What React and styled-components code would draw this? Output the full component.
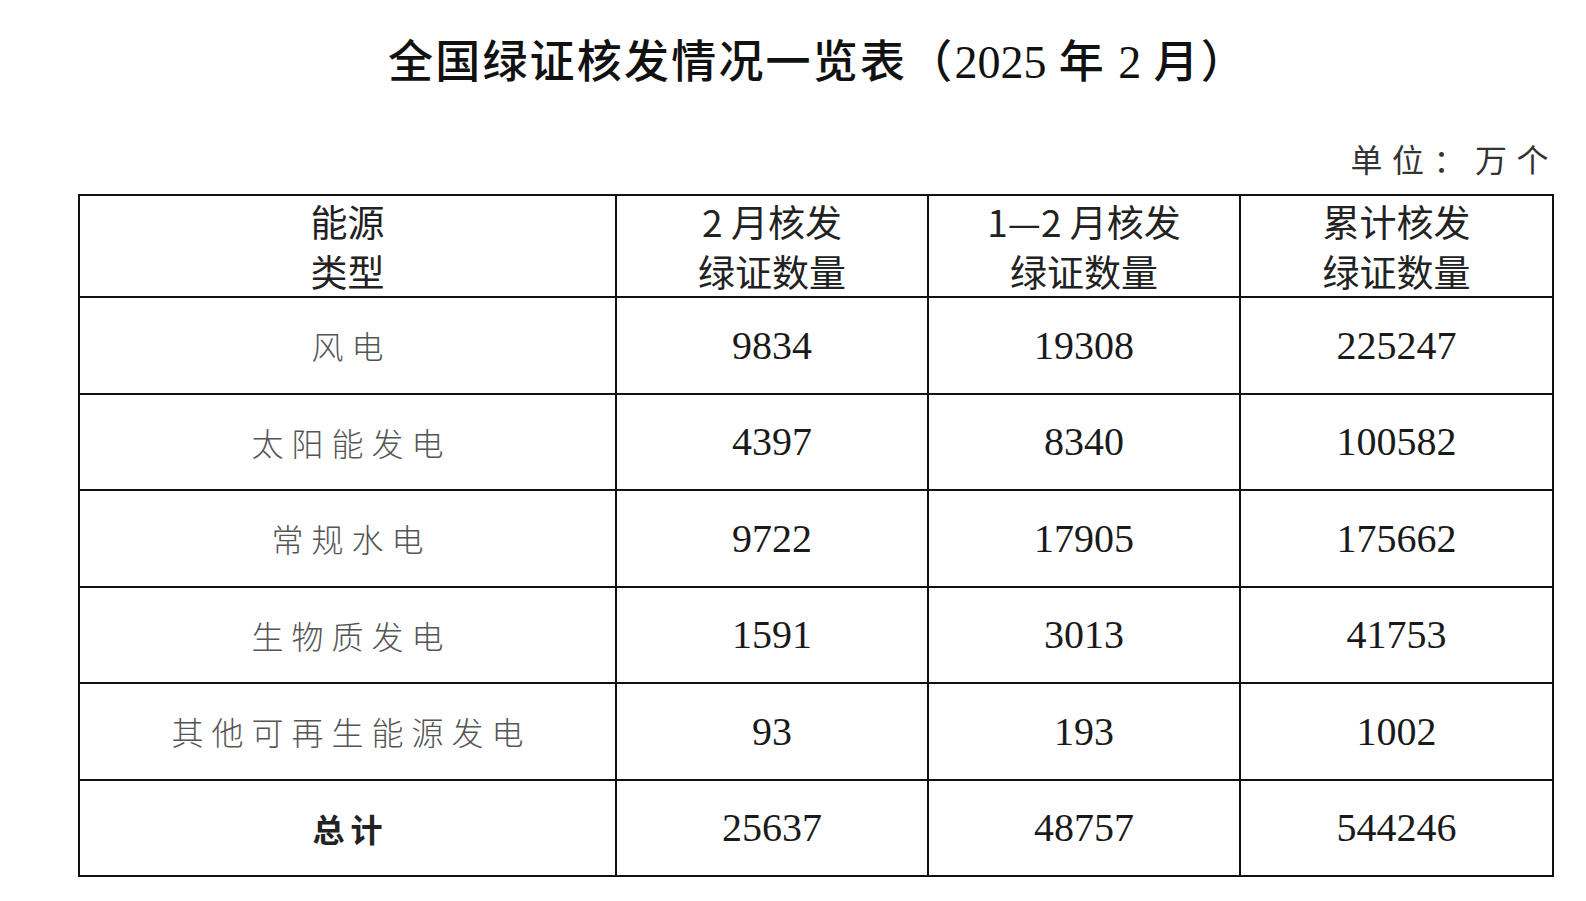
import styled, { createGlobalStyle } from "styled-components";

const GlobalStyle = createGlobalStyle`
  html, body {
    margin: 0;
    padding: 0;
    background: #ffffff;
  }
`;

const rows = [
  { name: "风电", feb: "9834", janFeb: "19308", total: "225247" },
  { name: "太阳能发电", feb: "4397", janFeb: "8340", total: "100582" },
  { name: "常规水电", feb: "9722", janFeb: "17905", total: "175662" },
  { name: "生物质发电", feb: "1591", janFeb: "3013", total: "41753" },
  { name: "其他可再生能源发电", feb: "93", janFeb: "193", total: "1002" },
];

const App = () => {
  return (
    <Page>
      <GlobalStyle />
      <Title>
        全国绿证核发情况一览表（<Num>2025</Num> 年 <Num>2</Num> 月）
      </Title>
      <Unit>单位：万个</Unit>
      <Table>
        <colgroup>
          <col style={{ width: 537 }} />
          <col style={{ width: 312 }} />
          <col style={{ width: 312 }} />
          <col style={{ width: 313 }} />
        </colgroup>
        <thead>
          <tr>
            <HeadCell>
              能源
              <br />
              类型
            </HeadCell>
            <HeadCell>
              2 月核发
              <br />
              绿证数量
            </HeadCell>
            <HeadCell>
              1—2 月核发
              <br />
              绿证数量
            </HeadCell>
            <HeadCell>
              累计核发
              <br />
              绿证数量
            </HeadCell>
          </tr>
        </thead>
        <tbody>
          {rows.map((r) => (
            <tr key={r.name}>
              <NameCell>{r.name}</NameCell>
              <NumCell>{r.feb}</NumCell>
              <NumCell>{r.janFeb}</NumCell>
              <NumCell>{r.total}</NumCell>
            </tr>
          ))}
          <tr>
            <NameCell $bold>总计</NameCell>
            <NumCell>25637</NumCell>
            <NumCell>48757</NumCell>
            <NumCell>544246</NumCell>
          </tr>
        </tbody>
      </Table>
    </Page>
  );
};

export default App;

const Page = styled.div`
  width: 1474px;
  padding: 36px 34px 0 78px;
  font-family: "Noto Sans CJK SC", sans-serif;
  color: #1a1a1a;
`;

const Title = styled.div`
  text-align: center;
  padding-left: 6px;
  font-size: 45px;
  line-height: 46px;
  font-weight: 500;
  color: #111;
  letter-spacing: 2.2px;
`;

const Num = styled.span`
  font-family: "Liberation Serif", serif;
  font-size: 46px;
  letter-spacing: 0;
`;

const Unit = styled.div`
  margin-top: 56px;
  text-align: right;
  font-size: 32px;
  line-height: 32px;
  letter-spacing: 9.5px;
  margin-right: -6px;
  font-weight: 400;
  color: #333;
`;

const Table = styled.table`
  margin-top: 20px;
  width: 1474px;
  border-collapse: collapse;
  table-layout: fixed;
  border: 2px solid #111;

  td,
  th {
    border: 2px solid #111;
    text-align: center;
    vertical-align: middle;
    padding: 0;
  }
`;

const HeadCell = styled.th`
  height: 100px;
  font-size: 37px;
  line-height: 50px;
  font-weight: 400;
  color: #222;
`;

const NameCell = styled.td`
  height: 94.5px;
  font-size: 32px;
  padding-left: ${(p) => (p.$bold ? "6px" : "8px")} !important;
  letter-spacing: ${(p) => (p.$bold ? "6px" : "8px")};
  font-weight: ${(p) => (p.$bold ? 700 : 300)};
  color: ${(p) => (p.$bold ? "#222" : "#555")};
`;

const NumCell = styled.td`
  height: 94.5px;
  font-family: "Liberation Serif", serif;
  font-size: 40px;
  color: #1a1a1a;
`;
